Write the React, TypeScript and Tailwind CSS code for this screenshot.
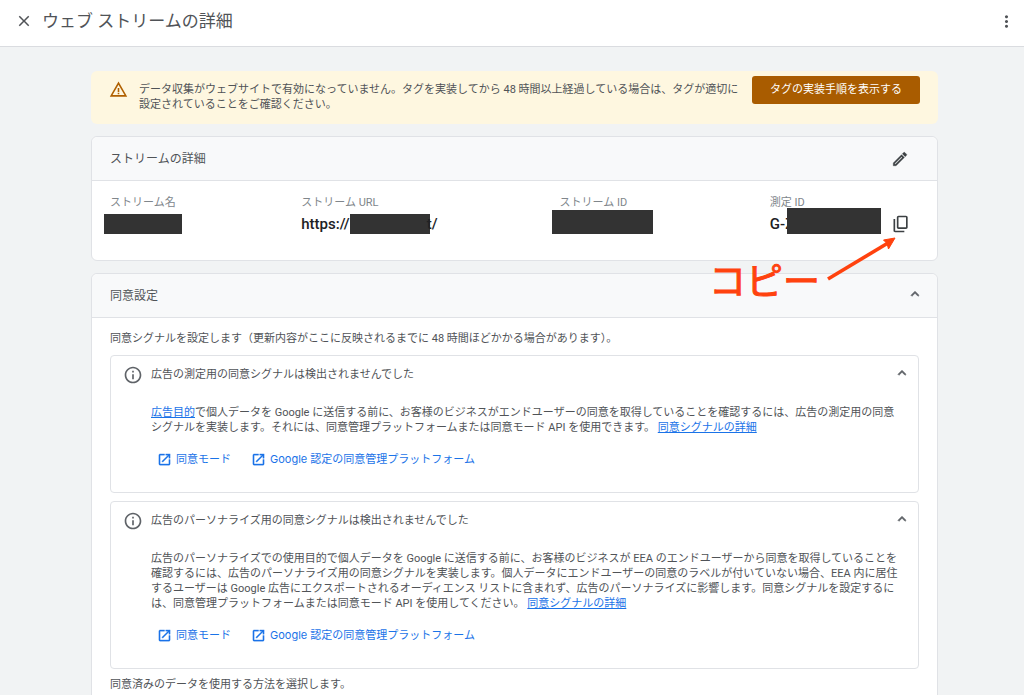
import React, { useState } from 'react';
import {
  MdClose,
  MdInfoOutline,
  MdKeyboardArrowUp,
  MdMoreVert,
  MdOpenInNew,
  MdOutlineEdit,
  MdWarningAmber,
} from 'react-icons/md';

const signals = [
  {
    title: '広告の測定用の同意シグナルは検出されませんでした',
    lead: '広告目的',
    body: 'で個人データを Google に送信する前に、お客様のビジネスがエンドユーザーの同意を取得していることを確認するには、広告の測定用の同意シグナルを実装します。それには、同意管理プラットフォームまたは同意モード API を使用できます。',
  },
  {
    title: '広告のパーソナライズ用の同意シグナルは検出されませんでした',
    lead: '',
    body: '広告のパーソナライズでの使用目的で個人データを Google に送信する前に、お客様のビジネスが EEA のエンドユーザーから同意を取得していることを確認するには、広告のパーソナライズ用の同意シグナルを実装します。個人データにエンドユーザーの同意のラベルが付いていない場合、EEA 内に居住するユーザーは Google 広告にエクスポートされるオーディエンス リストに含まれず、広告のパーソナライズに影響します。同意シグナルを設定するには、同意管理プラットフォームまたは同意モード API を使用してください。',
  },
];

const actions = ['同意モード', 'Google 認定の同意管理プラットフォーム'];

function CopyIcon() {
  return (
    <svg viewBox="0 -960 960 960" className="w-5 h-5" fill="currentColor" aria-hidden="true">
      <path d="M360-240q-33 0-56.5-23.5T280-320v-480q0-33 23.5-56.5T360-880h360q33 0 56.5 23.5T800-800v480q0 33-23.5 56.5T720-240H360Zm0-80h360v-480H360v480ZM200-80q-33 0-56.5-23.5T120-160v-560h80v560h440v80H200Z" />
    </svg>
  );
}

function SignalCard({ title, lead, body }: { title: string; lead: string; body: string }) {
  const [open, setOpen] = useState(true);

  return (
    <section className="border border-[#e0e2e6] rounded-sm">
      <button
        onClick={() => setOpen(!open)}
        aria-expanded={open}
        className="flex items-center w-full h-[38px] pl-3 pr-2 text-left"
      >
        <MdInfoOutline className="w-5 h-5 text-[#5f6368]" />
        <span className="flex-1 ml-2">{title}</span>
        <MdKeyboardArrowUp className="w-4 h-4 -mt-1 text-[#5f6368] [&>path:last-child]:stroke-1" />
      </button>
      {open && (
        <div className="pl-10 pr-4 pt-[11px] pb-[25px]">
          <p className="leading-[15px]">
            {lead && (
              <a href="#purpose" className="text-[#1a73e8] underline">
                {lead}
              </a>
            )}
            {body}{' '}
            <a href="#signals" className="text-[#1a73e8] underline">
              同意シグナルの詳細
            </a>
          </p>
          <div className="flex gap-5 pl-1.5 mt-4 font-[Inter,'Noto_Sans_CJK_JP',sans-serif]">
            {actions.map((action) => (
              <a
                key={action}
                href="#open"
                className="flex items-center gap-1 leading-4 text-[#1a73e8]"
              >
                <MdOpenInNew className="w-[15px] h-[15px] [&>path:last-child]:stroke-[0.5]" />
                {action}
              </a>
            ))}
          </div>
        </div>
      )}
    </section>
  );
}

export default function App() {
  const [consentOpen, setConsentOpen] = useState(true);

  return (
    <div
      lang="ja"
      className="min-h-screen bg-[#f1f3f4] text-[11px] text-[#505357] font-[Roboto,'Noto_Sans_CJK_JP',sans-serif]"
    >
      <header className="flex items-center h-[47px] pl-[15px] pr-2 pb-1 bg-white border-b border-[#dadce0]">
        <button aria-label="閉じる">
          <MdClose className="w-[18px] h-[18px]" />
        </button>
        <h1 className="flex-1 ml-[9px] text-[17px] leading-6">ウェブ ストリームの詳細</h1>
        <button aria-label="その他">
          <MdMoreVert className="w-[19px] h-[19px]" />
        </button>
      </header>

      <main className="flex flex-col gap-3 pt-6 pl-[91px] pr-[86px]">
        <div className="flex items-start px-[18px] pt-[5px] pb-3 rounded-md bg-[#fef7e0]">
          <MdWarningAmber className="w-[19px] h-[19px] mt-1 text-[#b06000]" />
          <p className="flex-1 ml-[11px] mt-1.5 leading-[15px]">
            データ収集がウェブサイトで有効になっていません。タグを実装してから 48 時間以上経過している場合は、タグが適切に設定されていることをご確認ください。
          </p>
          <button className="w-[168px] h-7 ml-2 rounded-[3px] bg-[#a95c00] text-white">
            タグの実装手順を表示する
          </button>
        </div>

        {/* Stream details */}
        <section className="relative bg-white border border-[#e0e2e6] rounded-md">
          <div className="flex items-center justify-between h-11 pl-[18px] pr-7 bg-[#f8f9fa] border-b border-[#e0e2e6] rounded-t-md">
            <h2 className="text-[12px]">ストリームの詳細</h2>
            <button aria-label="編集" className="text-[#3c4043]">
              <MdOutlineEdit className="w-[18px] h-[18px] [&>path:last-child]:stroke-[0.5]" />
            </button>
          </div>
          <dl className="grid grid-cols-[191fr_258fr_210fr_149fr] px-[18px] pt-3.5 pb-[26px]">
            <div>
              <dt className="leading-4 text-[#80868b]">ストリーム名</dt>
              <dd className="h-5 mt-[3px]">
                <span className="block w-[78px] h-5 -ml-1.5 bg-[#333]" />
              </dd>
            </div>
            <div>
              <dt className="leading-4 text-[#80868b]">ストリーム URL</dt>
              <dd className="flex items-center h-5 mt-[3px] text-[15px] font-medium text-[#202124]">
                https://
                <span className="w-20 h-5 bg-[#333]" />
                <span className="-ml-[3px]">t/</span>
              </dd>
            </div>
            <div>
              <dt className="leading-4 text-[#80868b]">ストリーム ID</dt>
              <dd className="h-5 mt-[3px]">
                <span className="block w-[101px] h-6 -ml-2 -mt-1 bg-[#333]" />
              </dd>
            </div>
            <div>
              <dt className="leading-4 text-[#80868b]">測定 ID</dt>
              <dd className="flex items-center h-5 mt-[3px] text-[15px] font-medium text-[#202124]">
                G-Z
                <span className="w-[94px] h-[26px] -ml-[7px] -mt-1.5 bg-[#333]" />
                <button aria-label="コピー" className="ml-2.5 text-[#3c4043]">
                  <CopyIcon />
                </button>
              </dd>
            </div>
          </dl>

          {/* Callout pointing at the copy button */}
          <div className="absolute right-[39px] top-[98px] z-10 flex items-start text-[#ff420e] pointer-events-none">
            <span className="mt-6 text-[37px] leading-[48px] [-webkit-text-stroke:1px_#ff420e]">コピー</span>
            <svg viewBox="0 0 72 48" className="w-[72px] h-12 ml-1.5" aria-hidden="true">
              <path d="M2 44 L62 8" stroke="currentColor" strokeWidth="3.6" fill="none" />
              <path d="M69 3 L57.500 5 L61 8.500 L62.500 14 Z" fill="currentColor" stroke="currentColor" strokeWidth="1" />
            </svg>
          </div>
        </section>

        {/* Consent settings */}
        <section className="bg-white border border-[#e0e2e6] rounded-md">
          <h2 className="border-b border-[#e0e2e6]">
            <button
              onClick={() => setConsentOpen(!consentOpen)}
              aria-expanded={consentOpen}
              className="flex items-center justify-between w-full h-[43px] pl-[18px] pr-3.5 text-[12px] bg-[#f8f9fa] rounded-t-md"
            >
              同意設定
              <MdKeyboardArrowUp className="w-4 h-4 -mt-1 text-[#5f6368] [&>path:last-child]:stroke-1" />
            </button>
          </h2>
          {consentOpen && (
            <div className="px-[18px] pt-[13px] pb-4">
              <p className="leading-4">
                同意シグナルを設定します（更新内容がここに反映されるまでに 48 時間ほどかかる場合があります）。
              </p>
              <div className="flex flex-col gap-2 my-2">
                {signals.map((signal) => (
                  <SignalCard key={signal.title} {...signal} />
                ))}
              </div>
              <p className="leading-4">同意済みのデータを使用する方法を選択します。</p>
            </div>
          )}
        </section>
      </main>
    </div>
  );
}
